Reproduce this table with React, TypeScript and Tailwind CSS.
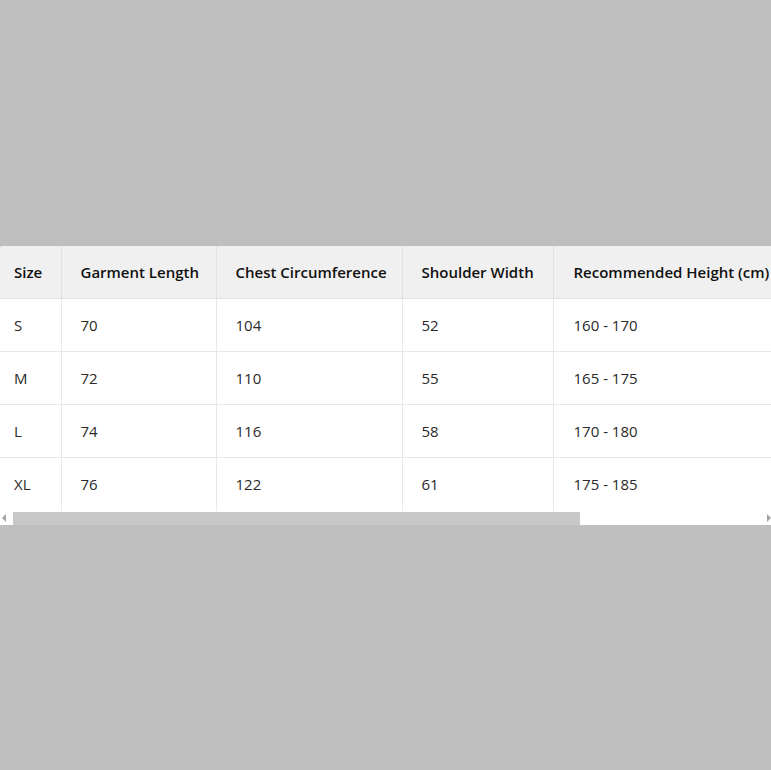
import React from "react"

const rows = [
  { size: "S", length: "70", chest: "104", shoulder: "52", height: "160 - 170" },
  { size: "M", length: "72", chest: "110", shoulder: "55", height: "165 - 175" },
  { size: "L", length: "74", chest: "116", shoulder: "58", height: "170 - 180" },
  { size: "XL", length: "76", chest: "122", shoulder: "61", height: "175 - 185" },
]

const headers = ["Size", "Garment Length", "Chest Circumference", "Shoulder Width", "Recommended Height (cm)"]
const pads = ["pl-[14px]", "pl-[19px]", "pl-[19px]", "pl-[19px]", "pl-[20px]"]

// headless browser hides native scrollbars, so the classic one is drawn by hand
function Scrollbar() {
  return (
    <div className="flex h-[14px] items-end bg-white">
      <div className="flex h-[13px] w-[13px] items-center justify-start pl-[2px]">
        <div className="h-0 w-0 border-y-[4px] border-r-[4px] border-y-transparent border-r-[#a3a3a3]" />
      </div>
      <div className="h-[13px] w-[567px] bg-[#c8c8c8]" />
      <div className="flex-1" />
      <div className="flex h-[13px] w-[13px] items-center justify-end">
        <div className="h-0 w-0 border-y-[4px] border-l-[4px] border-y-transparent border-l-[#a3a3a3]" />
      </div>
    </div>
  )
}

export default function App() {
  const last = rows.length - 1
  return (
    <div
      className="flex min-h-[770px] w-full items-center bg-[#bfbfbf]"
      style={{ fontFamily: '"Open Sans", "Noto Sans", sans-serif' }}
    >
      <div className="w-full overflow-hidden rounded-tl-[3px] bg-white">
        <div className="overflow-hidden">
          <table className="w-[1013px] table-fixed border-collapse text-[15px] text-[#2a2a2a]">
            <colgroup>
              <col className="w-[61px]" />
              <col className="w-[155px]" />
              <col className="w-[186px]" />
              <col className="w-[151px]" />
              <col />
            </colgroup>
            <thead>
              <tr className="bg-[#f0f0f0]">
                {headers.map((h, i) => (
                  <th
                    key={h}
                    className={`h-[53px] whitespace-nowrap border-b border-r border-[#e2e2e2] text-left font-semibold text-[#111] ${pads[i]}`}
                  >
                    {h}
                  </th>
                ))}
              </tr>
            </thead>
            <tbody>
              {rows.map((r, idx) => (
                <tr key={r.size}>
                  {[r.size, r.length, r.chest, r.shoulder, r.height].map((v, i) => (
                    <td
                      key={i}
                      className={`h-[53px] border-[#e8e8e8] ${pads[i]} ${i < 4 ? "border-r" : ""} ${idx < last ? "border-b" : ""}`}
                    >
                      {v}
                    </td>
                  ))}
                </tr>
              ))}
            </tbody>
          </table>
        </div>
        <Scrollbar />
      </div>
    </div>
  )
}
